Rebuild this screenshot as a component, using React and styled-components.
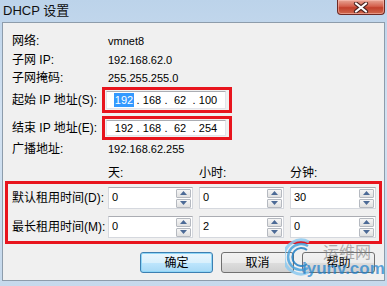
import React from 'react'
import styled, { createGlobalStyle, css } from 'styled-components'

const GlobalStyle = createGlobalStyle`
  html, body {
    margin: 0;
    padding: 0;
    background: #c4d7eb;
  }
  body {
    font-family: "Liberation Sans", "Noto Sans CJK SC", sans-serif;
    font-size: 12px;
    color: #000;
  }
`

const info = [
  { label: '网络:', value: 'vmnet8', h: 19 },
  { label: '子网 IP:', value: '192.168.62.0', h: 19 },
  { label: '子网掩码:', value: '255.255.255.0', h: 18 }
]

const ipRows = [
  { label: '起始 IP 地址(S):', parts: ['192', '168', '62', '100'], selected: true, h: 26 },
  { label: '结束 IP 地址(E):', parts: ['192', '168', '62', '254'], h: 24 }
]

const leases = [
  { label: '默认租用时间(D):', values: ['0', '0', '30'] },
  { label: '最长租用时间(M):', values: ['0', '2', '0'] }
]

function Spinner () {
  return (
    <Spin>
      <SpinBtn>
        <svg width='7' height='4' viewBox='0 0 7 4'>
          <path d='M0 4 L3.5 0 L7 4 Z' fill='#4c6a96' />
        </svg>
      </SpinBtn>
      <SpinBtn>
        <svg width='7' height='4' viewBox='0 0 7 4'>
          <path d='M0 0 L7 0 L3.5 4 Z' fill='#4c6a96' />
        </svg>
      </SpinBtn>
    </Spin>
  )
}

function Watermark () {
  return (
    <Mark>
      <svg width='26' height='42' viewBox='0 0 26 42'>
        <path d='M24 6 A17 17 0 1 0 24 36' fill='none' stroke='#8ccaf0' strokeWidth='3' />
        <path d='M23 10 A13 13 0 1 0 23 32' fill='none' stroke='#4aa3dd' strokeWidth='2.5' />
        <path d='M22 14 A9 9 0 1 0 22 28' fill='none' stroke='#1f7fc6' strokeWidth='2' />
      </svg>
      <MarkText>
        <MarkCn>运维网</MarkCn>
        <MarkEn>iyunv.com</MarkEn>
      </MarkText>
    </Mark>
  )
}

export default function App () {
  return (
    <>
      <GlobalStyle />
      <Window>
        <TitleBar>
          <Title>DHCP 设置</Title>
          <Close>
            <svg width='16' height='11' viewBox='0 0 16 11'>
              <path d='M3 1.5 L13 9.5 M13 1.5 L3 9.5' stroke='#4a2320' strokeWidth='4.2' strokeLinecap='round' />
              <path d='M3 1.5 L13 9.5 M13 1.5 L3 9.5' stroke='#fff' strokeWidth='2.2' strokeLinecap='round' />
            </svg>
          </Close>
        </TitleBar>
        <Panel>
          {info.map(r => (
            <Row key={r.label} h={r.h}>
              <Label>{r.label}</Label>
              <Value>{r.value}</Value>
            </Row>
          ))}
          {ipRows.map((r, i) => (
            <Row key={r.label} h={r.h} top={i ? 3 : 0}>
              <Label>{r.label}</Label>
              <RedBox>
                <IpInput>
                  {r.parts.map((p, j) => (
                    <React.Fragment key={j}>
                      {j > 0 && <Dot>.</Dot>}
                      <Octet>
                        {r.selected && j === 0 ? <Sel>{p}</Sel> : p}
                      </Octet>
                    </React.Fragment>
                  ))}
                </IpInput>
              </RedBox>
            </Row>
          ))}
          <Row h={17}>
            <Label>广播地址:</Label>
            <Value>192.168.62.255</Value>
          </Row>
          <Heads>
            <span />
            <Head>天:</Head>
            <Head>小时:</Head>
            <Head>分钟:</Head>
          </Heads>
          <LeaseBox>
            {leases.map(l => (
              <LeaseRow key={l.label}>
                <LeaseLabel>{l.label}</LeaseLabel>
                {l.values.map((v, k) => (
                  <NumBox key={k}>
                    <NumText>{v}</NumText>
                    <Spinner />
                  </NumBox>
                ))}
              </LeaseRow>
            ))}
          </LeaseBox>
          <Buttons>
            <Button primary>确定</Button>
            <Button>取消</Button>
            <Button>帮助</Button>
          </Buttons>
          <Watermark />
        </Panel>
      </Window>
    </>
  )
}

const Window = styled.div`
  width: 387px;
  height: 286px;
  display: flex;
  flex-direction: column;
  background: linear-gradient(180deg, #bcd3ea 0%, #d3e2f2 40%, #c6d9ec 100%);
  overflow: hidden;
`

const TitleBar = styled.div`
  height: 22px;
  display: flex;
  align-items: flex-start;
  justify-content: space-between;
  padding-left: 3px;
  padding-right: 2px;
`

const Title = styled.div`
  font-size: 13px;
  line-height: 22px;
  color: #111;
  font-family: "Liberation Sans", "Noto Sans CJK SC", sans-serif;
`

const Close = styled.div`
  width: 46px;
  height: 14px;
  display: flex;
  align-items: center;
  justify-content: center;
  border: 1px solid #6e2a24;
  border-top: none;
  border-radius: 0 0 4px 4px;
  background: linear-gradient(180deg, #e8a595 0%, #d4604d 45%, #c2402c 55%, #cf6a4f 100%);
  box-shadow: inset 0 0 0 1px rgba(255, 200, 190, 0.5);
`

const Panel = styled.div`
  position: relative;
  margin: 0 2px;
  height: 259px;
  box-sizing: border-box;
  border: 1px solid #8d9cab;
  background: #f0f0f0;
  display: flex;
  flex-direction: column;
  padding-top: 8px;
`

const Row = styled.div`
  display: flex;
  align-items: center;
  height: ${p => p.h}px;
  margin-top: ${p => p.top || 0}px;
  padding-left: 9px;
`

const Label = styled.div`
  width: 90px;
  flex: none;
  line-height: 16px;
  white-space: nowrap;
`

const Value = styled.div`
  padding-left: 6px;
  font-size: 11px;
  line-height: 14px;
`

const RedBox = styled.div`
  width: 130px;
  height: 100%;
  box-sizing: border-box;
  border: 3px solid #e8141d;
  padding: 1px 3px 1px 1px;
  display: flex;
`

const IpInput = styled.div`
  flex: 1;
  display: flex;
  align-items: center;
  box-sizing: border-box;
  background: #fff;
  border: 1px solid #e2e3ea;
  border-top-color: #abadb3;
  padding-left: 6px;
  font-size: 11px;
`

const Octet = styled.span`
  width: 22px;
  text-align: center;
`

const Dot = styled.span`
  width: 6px;
  text-align: center;
`

const Sel = styled.span`
  background: #3399ff;
  color: #fff;
  padding: 1px 1px;
`

const Heads = styled.div`
  display: grid;
  grid-template-columns: 90px 85px 85px 86px;
  column-gap: 6px;
  padding-left: 9px;
  margin-top: 7px;
  margin-bottom: -1px;
  height: 18px;
  align-items: center;
`

const Head = styled.div`
  line-height: 16px;
`

const LeaseBox = styled.div`
  position: relative;
  margin-left: 2px;
  width: 377px;
  box-sizing: border-box;
  border: 3px solid #e8141d;
  padding: 3px 0 3px 4px;
  display: flex;
  flex-direction: column;
  gap: 7px;
`

const LeaseRow = styled.div`
  display: grid;
  grid-template-columns: 90px 85px 85px 86px;
  column-gap: 6px;
  height: 22px;
  align-items: center;
`

const LeaseLabel = styled.div`
  line-height: 16px;
  white-space: nowrap;
`

const NumBox = styled.div`
  height: 22px;
  box-sizing: border-box;
  display: flex;
  align-items: center;
  justify-content: space-between;
  background: #fff;
  border: 1px solid #d5d8de;
  border-top-color: #abadb3;
  padding: 0 1px 0 3px;
`

const NumText = styled.span`
  font-size: 11px;
  align-self: flex-start;
  line-height: 14px;
  padding-top: 2px;
`

const Spin = styled.div`
  display: flex;
  flex-direction: column;
  gap: 1px;
`

const SpinBtn = styled.div`
  width: 15px;
  height: 9px;
  box-sizing: border-box;
  border: 1px solid #b5b9c0;
  border-radius: 1px;
  background: linear-gradient(180deg, #f6f6f6, #e0e0e0);
  display: flex;
  align-items: center;
  justify-content: center;
`

const Buttons = styled.div`
  display: flex;
  justify-content: flex-end;
  gap: 8px;
  padding-right: 9px;
  margin-top: 8px;
`

const Button = styled.div`
  width: 73px;
  height: 21px;
  box-sizing: border-box;
  border: 1px solid #707070;
  border-radius: 3px;
  background: linear-gradient(180deg, #f2f2f2 0%, #ebebeb 50%, #dddddd 51%, #cfcfcf 100%);
  display: flex;
  align-items: center;
  justify-content: center;
  line-height: 16px;
  font-size: 12px;
  ${p =>
    p.primary &&
    css`
      border-color: #3c7fb1;
      box-shadow: inset 0 0 0 1px #8fd6f7;
      background: linear-gradient(180deg, #eaf6fd 0%, #d9f0fc 50%, #bee6fd 51%, #a7d9f5 100%);
    `}
`

const Mark = styled.div`
  position: absolute;
  left: 282px;
  top: 213px;
  display: flex;
  align-items: flex-start;
  opacity: 0.85;
  pointer-events: none;
`

const MarkText = styled.div`
  display: flex;
  flex-direction: column;
  margin-left: -9px;
  padding-top: 6px;
`

const MarkCn = styled.div`
  font-family: "Noto Sans CJK SC", sans-serif;
  font-size: 16px;
  line-height: 18px;
  color: rgba(120, 120, 120, 0.7);
  margin-left: 21px;
`

const MarkEn = styled.div`
  font-family: "Liberation Sans", sans-serif;
  font-size: 17px;
  line-height: 17px;
  color: rgba(30, 130, 205, 0.85);
  font-weight: bold;
`
